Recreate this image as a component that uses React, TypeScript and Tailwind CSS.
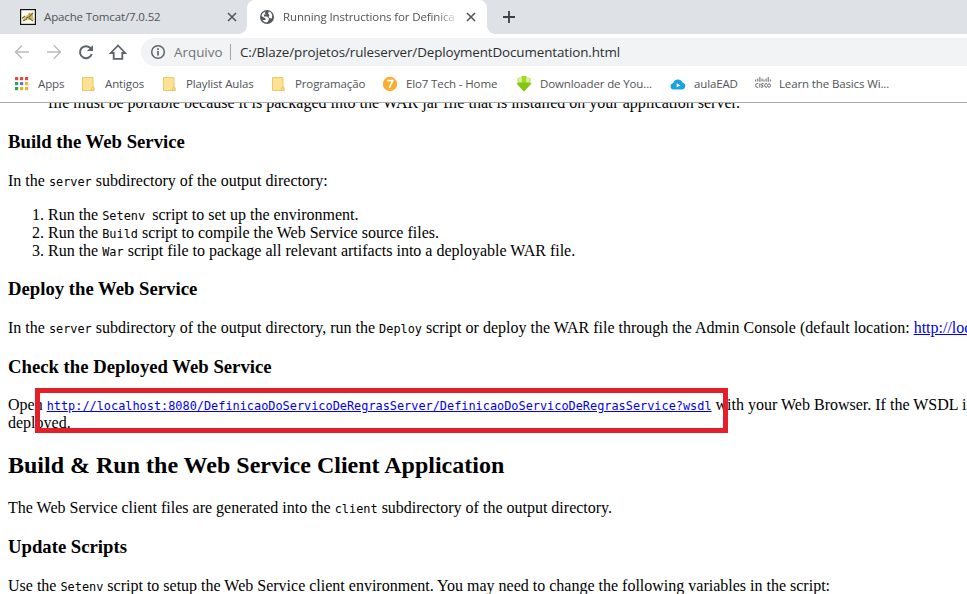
import React from "react";

const Code = ({ children }: { children: React.ReactNode }) => (
  <code className="font-['DejaVu_Sans_Mono',monospace] text-[11.88px] leading-none">{children}</code>
);

const H3 = ({ children }: { children: React.ReactNode }) => (
  <h3 className="my-[18.72px] h-[22px] text-[18.72px] leading-[21px] font-bold">{children}</h3>
);

const Close = () => (
  <svg className="size-3 shrink-0" viewBox="0 0 12 12" stroke="#55585c" strokeWidth="1.6" fill="none">
    <path d="M2 2 10 10M10 2 2 10" />
  </svg>
);

const Folder = () => (
  <svg className="size-4" viewBox="0 0 16 16">
    <path d="M1.500 1.500h10.500v9.500l1 1v2.500H1.500z" fill="#fde293" stroke="#eccb66" />
    <path d="M10.500 14.500v-2.500l1.500-1.500 1 1.500v2.500z" fill="#fbdc80" stroke="#e8c258" strokeWidth=".8" />
  </svg>
);

const AppsIcon = () => (
  <svg className="size-4" viewBox="0 0 16 16">
    {["#dd4b42", "#dd4b42", "#dd4b42", "#34a05a", "#4285d4", "#e8b52c", "#34a05a", "#e0b02c", "#e8b52c"].map((c, i) => (
      <rect key={i} x={1 + (i % 3) * 5} y={1 + Math.floor(i / 3) * 5} width="3.2" height="3.2" fill={c} />
    ))}
  </svg>
);

const Elo = () => (
  <svg className="size-4" viewBox="0 0 16 16">
    <circle cx="8" cy="8" r="7.2" fill="#fbad2f" />
    <path d="M5.200 4.700h5.500L7.300 12" fill="none" stroke="#fff" strokeWidth="1.700" />
  </svg>
);

const Download = () => (
  <svg className="size-4" viewBox="0 0 16 16">
    <path d="M5.400 0h5.200v8H5.400z" fill="#a3dc1e" />
    <path d="M1.500 2h1.300v5H1.500zM3.500 1h1v6h-1zM13.200 2h1.300v5h-1.300zM11.500 1h1v6h-1z" fill="#b2de55" />
    <path d="M.5 7.500 3 6.500h10l2.500 1L8 15.800z" fill="#86c313" />
  </svg>
);

const Cloud = () => (
  <svg className="size-4" viewBox="0 0 16 16">
    <path d="M3.500 13.500a3.300 3.300 0 0 1-.3-6.500A5 5 0 0 1 12.500 6.500a3.600 3.600 0 0 1 0 7z" fill="#18a4e4" />
    <path d="M6.700 7.200v4.300L10.300 9.400z" fill="#fff" />
  </svg>
);

const Cisco = () => (
  <svg className="h-4 w-4" viewBox="0 0 16 16" fill="none" stroke="#64676a" strokeWidth="1">
    <path d="M.7 3.500v2M2.800 2.500v3M4.900 1v5M7 2.500v3M9 3.500v2M11.100 2.500v3M13.200 1v5M15.300 3.500v2" />
    <path d="M3.300 7.700H2Q.6 7.700.6 9.400T2 11.200h1.300M4.800 7.500v4M8.600 7.700H7q-1.200 0-.6 1.400l1.600.5q.6 1.600-.8 1.600H6M12 7.700h-1q-1.300 0-1.300 1.700T11 11.200h1" />
    <ellipse cx="14" cy="9.500" rx="1.500" ry="1.700" />
  </svg>
);

const bookmarks = [
  { label: "Apps", Icon: AppsIcon, box: "w-[67px]" },
  { label: "Antigos", Icon: Folder, box: "w-[81px]" },
  { label: "Playlist Aulas", Icon: Folder, box: "w-[109px]" },
  { label: "Programação", Icon: Folder, box: "w-[111px]" },
  { label: "Elo7 Tech - Home", Icon: Elo, box: "w-[134px]" },
  { label: "Downloader de You...", Icon: Download, box: "w-[154px]" },
  { label: "aulaEAD", Icon: Cloud, box: "w-[85px]" },
  { label: "Learn the Basics Wi...", Icon: Cisco, box: "w-[150px]" },
];

function Chrome() {
  return (
    <header className="h-[103px] border-b border-[#a9abad] bg-white font-['Open_Sans',sans-serif] text-[11.5px] tracking-[-0.13px] text-[#505357]">
      <div className="flex h-[34px] bg-[#dee1e6]">
        <div className="flex w-[247px] items-center pr-[9px] pl-5">
          <svg className="size-4 shrink-0" viewBox="0 0 16 16">
            <rect x=".6" y=".6" width="14.800" height="14.800" fill="#fffdf2" stroke="#111" strokeWidth="1.200" />
            <path d="m2 12 3-4 2-2 3-1 3-2v4l1 4-3-1-2 1-3-1-2 1z" fill="#d2bd72" />
            <path d="m2 9.500 3-2.500M6 9l3-1 4-4M9 9l4 3M3 12l4-2" fill="none" stroke="#756a3c" strokeWidth="1.100" />
            <path d="m8 5 2-1.500 1 2-1.500 1.500z" fill="#d98e32" />
          </svg>
          <span className="ml-2 grow whitespace-nowrap">Apache Tomcat/7.0.52</span>
          <Close />
        </div>
        <div className="relative flex w-[240px] items-center rounded-t-lg bg-white pr-[10px] pl-3">
          <i className="absolute bottom-0 -left-2 size-2 bg-[radial-gradient(circle_at_0_0,#dee1e6_7.5px,white_8px)]" />
          <i className="absolute -right-2 bottom-0 size-2 bg-[radial-gradient(circle_at_100%_0,#dee1e6_7.5px,white_8px)]" />
          <svg className="size-4 shrink-0" viewBox="0 0 16 16">
            <circle cx="8" cy="8" r="7" fill="#55585c" />
            <path d="M7 2.500 5.500 4 7 5.500H5v2h3l2 2-.5 2L8 13.500Q5 13.500 3.500 11L6.500 11V9.500L2.500 7Q3 3 7 2.500M10 2.500l-1 2 1.500 1.500L9.500 8l1 1 2.500.5Q14 6 12 3.500z" fill="#fff" />
          </svg>
          <span className="ml-2 w-[178px] shrink-0 whitespace-nowrap [mask-image:linear-gradient(to_right,black_152px,transparent_178px)]">
            Running Instructions for Definica
          </span>
          <span className="grow" />
          <Close />
        </div>
        <svg className="mt-[11px] ml-4 size-3" viewBox="0 0 12 12" stroke="#3c4043" strokeWidth="1.800">
          <path d="M6 0v12M0 6h12" />
        </svg>
      </div>
      <div className="flex h-9 items-center pl-[14px]">
        <svg className="h-5 w-[116px] shrink-0" viewBox="0 0 116 20" fill="none" stroke="#5f6368" strokeWidth="1.800">
          <path d="M15 10H2M8 3.500 1.500 10 8 16.500" stroke="#b9bbbd" strokeWidth="1.500" />
          <path d="M33 10h13M40 3.500 46.500 10 40 16.500" stroke="#b9bbbd" strokeWidth="1.500" />
          <path d="M76.500 6.200A6 6 0 1 0 77.700 12" strokeWidth="2" />
          <path d="M79 3v6h-6z" fill="#5f6368" stroke="none" />
          <path d="M96.800 11H99.700V16.800H108.300V11H111.200L104 3.500z" />
        </svg>
        <div className="ml-[11px] flex h-7 grow items-center rounded-l-full bg-[#f1f3f4] pl-[9px] text-[13.4px]">
          <svg className="size-4 shrink-0" viewBox="0 0 16 16" fill="none" stroke="#5f6368" strokeWidth="1.500">
            <circle cx="8" cy="8" r="6.300" />
            <path d="M8 7v4.500M8 4.300v1.600" strokeWidth="1.700" />
          </svg>
          <span className="ml-2 w-14 tracking-normal text-[#707478]">Arquivo</span>
          <i className="mr-[9px] h-4 w-px bg-[#a0a3a6]" />
          <span className="tracking-[-0.11px] whitespace-nowrap text-[#2b2e31]">C:/Blaze/projetos/ruleserver/DeploymentDocumentation.html</span>
        </div>
      </div>
      <nav className="flex h-[28px] items-center pl-[14px]">
        {bookmarks.map(({ label, Icon, box }) => (
          <div key={label} className={`flex shrink-0 items-center gap-2 whitespace-nowrap ${box}`}>
            <Icon />
            <span>{label}</span>
          </div>
        ))}
      </nav>
    </header>
  );
}

export default function App() {
  return (
    <div className="h-[594px] w-[967px] overflow-hidden bg-white">
      <Chrome />
      <main className="relative h-[491px] overflow-hidden pl-2 font-['Liberation_Serif',serif] text-base leading-[18px] whitespace-nowrap text-black">
        <p className="-mt-[8.9px] h-[18px] pl-10">file must be portable because it is packaged into the WAR jar file that is installed on your application server.</p>
        <H3>Build the Web Service</H3>
        <p className="h-[18px]">In the <Code>server</Code> subdirectory of the output directory:</p>
        <ol className="mt-4 list-decimal pl-10">
          <li className="h-[18px]">Run the <Code>Setenv&nbsp;</Code>script to set up the environment.</li>
          <li className="h-[18px]">Run the <Code>Build</Code> script to compile the Web Service source files.</li>
          <li className="h-[18px]">Run the <Code>War</Code> script file to package all relevant artifacts into a deployable WAR file.</li>
        </ol>
        <H3>Deploy the Web Service</H3>
        <p className="h-[18px]">
          In the <Code>server</Code> subdirectory of the output directory, run the <Code>Deploy</Code> script or deploy the WAR file through the Admin Console (default location:{" "}
          <a className="text-[#0000ee] underline">http://localhost:8080</a>
        </p>
        <H3>Check the Deployed Web Service</H3>
        <p className="h-9">
          Open <a className="text-[#0000ee] underline"><Code>http://localhost:8080/DefinicaoDoServicoDeRegrasServer/DefinicaoDoServicoDeRegrasService?wsdl</Code></a> with your Web Browser. If the WSDL is
          <br />
          deployed.
        </p>
        <h2 className="my-[19.92px] h-[27px] text-2xl leading-[27px] font-bold">Build &amp; Run the Web Service Client Application</h2>
        <p className="h-[18px]">The Web Service client files are generated into the <Code>client</Code> subdirectory of the output directory.</p>
        <H3>Update Scripts</H3>
        <p className="h-[18px]">Use the <Code>Setenv</Code> script to setup the Web Service client environment. You may need to change the following variables in the script:</p>
        <div className="absolute top-[285px] left-[35px] h-[45px] w-[693px] border-5 border-[#e51f29]" />
      </main>
    </div>
  );
}
